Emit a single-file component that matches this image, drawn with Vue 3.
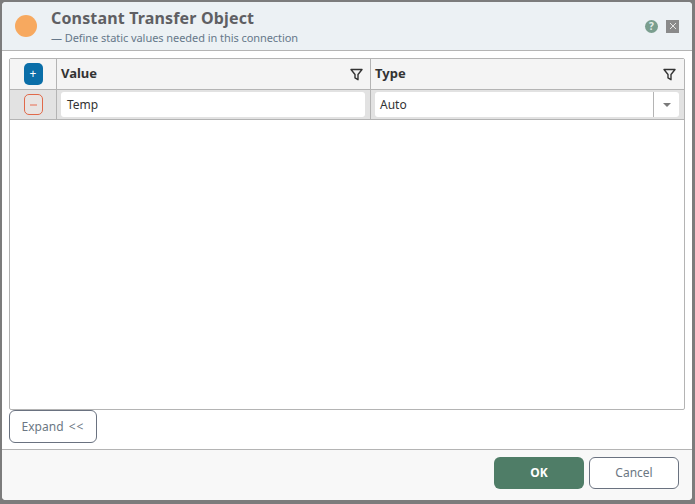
<script setup>
const columns = ['Value', 'Type']
</script>

<template>
  <div class="dialog">
    <header class="head">
      <span class="dot"></span>
      <div class="titles">
        <h1>Constant Transfer Object</h1>
        <p>— Define static values needed in this connection</p>
      </div>
      <span class="help">?</span>
      <span class="close">
        <svg width="8" height="8" viewBox="0 0 8 8"><path d="M1 1l6 6M7 1l-6 6" stroke="#e4e4e4" stroke-width="1" fill="none" /></svg>
      </span>
    </header>

    <main class="body">
      <section class="grid">
        <div class="row head-row">
          <div class="cell tool">
            <button class="add" type="button">+</button>
          </div>
          <div v-for="col in columns" :key="col" class="cell title">
            <span>{{ col }}</span>
            <svg class="funnel" width="13" height="13" viewBox="0 0 13 13">
              <path d="M1 1.5h11L8 6.5v5.2l-3-1.8V6.5z" fill="none" stroke="#333" stroke-width="1.4" stroke-linejoin="round" />
            </svg>
          </div>
        </div>
        <div class="row data-row">
          <div class="cell tool">
            <button class="remove" type="button"><i></i></button>
          </div>
          <div class="cell field">
            <div class="input">Temp</div>
          </div>
          <div class="cell field">
            <div class="input select">
              <span>Auto</span>
              <span class="arrow"><i></i></span>
            </div>
          </div>
        </div>
      </section>
      <button class="expand" type="button">Expand <span class="chev">&lt;&lt;</span></button>
    </main>

    <footer class="foot">
      <button class="ok" type="button">OK</button>
      <button class="cancel" type="button">Cancel</button>
    </footer>
  </div>
</template>

<style>
html, body {
  margin: 0;
  background: #7c7c7c;
}
</style>

<style scoped>
.dialog {
  box-sizing: border-box;
  width: 690px;
  height: 498px;
  margin: 2px 3px 4px 2px;
  display: flex;
  flex-direction: column;
  background: #fff;
  border-radius: 4px;
  overflow: hidden;
  font-family: "Noto Sans", "Open Sans", sans-serif;
  color: #333;
}
.head {
  height: 49px;
  flex: none;
  box-sizing: border-box;
  display: flex;
  align-items: center;
  background: #ecf1f4;
  border-bottom: 1px solid #b4b4b4;
}
.dot {
  width: 22px;
  height: 22px;
  margin-left: 13px;
  border-radius: 50%;
  background: #f7a95f;
}
.titles {
  margin-left: 14px;
  padding-top: 2px;
  flex: 1;
}
h1 {
  margin: 0 0 1px;
  font-size: 16px;
  line-height: 20px;
  font-weight: 700;
  letter-spacing: 0.16px;
  color: #5f5f63;
}
p {
  margin: 0;
  font-size: 11px;
  line-height: 18px;
  letter-spacing: -0.06px;
  color: #66788a;
}
.help {
  width: 13px;
  height: 13px;
  border-radius: 50%;
  background: #7a9e8e;
  color: #e6efea;
  font-size: 10px;
  font-weight: 700;
  line-height: 13px;
  text-align: center;
}
.close {
  width: 13px;
  height: 13px;
  margin: 0 13px 0 8px;
  background: #8a8a8a;
  display: flex;
  align-items: center;
  justify-content: center;
}
.body {
  flex: 1;
  padding: 7px 7px 0;
  display: flex;
  flex-direction: column;
}
.grid {
  box-sizing: border-box;
  width: 676px;
  height: 352px;
  flex: none;
  border: 1px solid #b4b4b4;
  border-radius: 2px;
}
.row {
  box-sizing: border-box;
  display: grid;
  grid-template-columns: 47px 314px 1fr;
}
.head-row {
  height: 31px;
  background: #f4f4f4;
  border-bottom: 1px solid #b4b4b4;
}
.data-row {
  height: 30px;
  background: #e2e2e2;
  border-bottom: 1px solid #b4b4b4;
}
.cell {
  box-sizing: border-box;
  display: flex;
  align-items: center;
  border-right: 1px solid #b4b4b4;
}
.cell:last-child {
  border-right: 0;
}
.tool {
  justify-content: center;
}
button {
  font-family: inherit;
  padding: 0;
  box-sizing: border-box;
}
.add {
  width: 19px;
  height: 22px;
  border: 0;
  border-radius: 5px;
  background: #0a6ea8;
  color: #fff;
  font-size: 12px;
  line-height: 20px;
}
.remove {
  width: 19px;
  height: 21px;
  border: 1px solid #e0694a;
  border-radius: 5px;
  background: #e8e4e2;
  display: flex;
  align-items: center;
  justify-content: center;
}
.remove i {
  width: 7px;
  height: 2px;
  background: #e8a899;
}
.title {
  justify-content: space-between;
  padding: 0 7px 0 4px;
  font-size: 13px;
  font-weight: 700;
  color: #333;
}
.title span {
  margin-top: -2px;
}
.title:last-child {
  padding-right: 8px;
}
.funnel {
  flex: none;
}
.field {
  padding: 0 5px 0 4px;
}
.input {
  box-sizing: border-box;
  width: 100%;
  height: 25px;
  padding: 0 6px;
  background: #fff;
  border-radius: 3px;
  font-size: 12px;
  line-height: 25px;
  color: #333;
}
.select {
  display: flex;
  justify-content: space-between;
  padding-right: 0;
  padding-left: 5px;
}
.arrow {
  width: 26px;
  height: 25px;
  box-sizing: border-box;
  border-left: 1px solid #b4b4b4;
  display: flex;
  align-items: center;
  justify-content: center;
}
.arrow i {
  border-left: 4px solid transparent;
  border-right: 4px solid transparent;
  border-top: 4px solid #7a7a7a;
}
.expand {
  width: 88px;
  height: 33px;
  border: 1px solid #6a7280;
  border-radius: 6px;
  background: #fff;
  color: #6c7783;
  font-size: 12px;
}
.chev {
  margin-left: 2px;
  letter-spacing: 1px;
}
.foot {
  margin-top: auto;
  height: 51px;
  flex: none;
  box-sizing: border-box;
  border-top: 1px solid #b4b4b4;
  background: #f8f8f8;
  display: flex;
  justify-content: flex-end;
  align-items: flex-start;
  gap: 5px;
  padding: 7px 13px 0 0;
}
.foot button {
  width: 90px;
  height: 32px;
  padding-bottom: 2px;
  border-radius: 6px;
  font-size: 12px;
}
.ok {
  border: 0;
  background: #4f7d67;
  color: #fff;
  font-weight: 700;
}
.cancel {
  border: 1px solid #6a7280;
  background: #fff;
  color: #6c7783;
}
</style>
